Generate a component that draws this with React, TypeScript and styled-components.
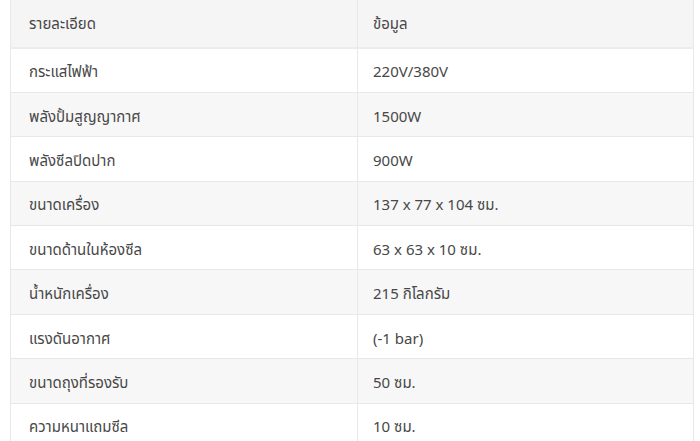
import React from "react";
import styled, { createGlobalStyle } from "styled-components";

const Global = createGlobalStyle`
  html, body { margin: 0; padding: 0; background: #ffffff; }
  body { font-family: "Noto Sans Thai", "Noto Sans", "Liberation Sans", sans-serif; }
`;

const Wrap = styled.div`
  padding: 0 6px 0 10px;
`;

const Table = styled.table`
  width: 684px;
  table-layout: fixed;
  border-collapse: collapse;
  border-left: 1px solid #e8e8e8;
  border-right: 1px solid #e8e8e8;
  font-size: 15px;
  font-weight: 400;
  color: #474747;
`;

const HeadCell = styled.th<{ $first?: boolean }>`
  background: #f5f5f5;
  text-align: left;
  font-weight: 400;
  height: 48px;
  padding: 1px 0 0 ${(p) => (p.$first ? "18px" : "15px")};
  border-bottom: 2px solid #ececec;
  border-right: 1px solid #e8e8e8;
  box-sizing: border-box;
`;

const Row = styled.tr<{ $stripe: boolean }>`
  background: ${(p) => (p.$stripe ? "#f7f7f7" : "#ffffff")};
`;

const Cell = styled.td<{ $first?: boolean }>`
  height: 44.4px;
  box-sizing: border-box;
  padding: 5px 0 0 ${(p) => (p.$first ? "18px" : "15px")};
  border-bottom: 1px solid #e8e8e8;
  border-right: 1px solid #e8e8e8;
`;

const rows: [string, string][] = [
  ["กระแสไฟฟ้า", "220V/380V"],
  ["พลังปั้มสูญญากาศ", "1500W"],
  ["พลังซีลปิดปาก", "900W"],
  ["ขนาดเครื่อง", "137 x 77 x 104 ซม."],
  ["ขนาดด้านในห้องซีล", "63 x 63 x 10 ซม."],
  ["น้ำหนักเครื่อง", "215 กิโลกรัม"],
  ["แรงดันอากาศ", "(-1 bar)"],
  ["ขนาดถุงที่รองรับ", "50 ซม."],
  ["ความหนาแถมซีล", "10 ซม."],
];

export default function App() {
  return (
    <>
      <Global />
      <Wrap>
        <Table>
          <colgroup>
            <col style={{ width: 347 }} />
            <col />
          </colgroup>
          <thead>
            <tr>
              <HeadCell $first>รายละเอียด</HeadCell>
              <HeadCell>ข้อมูล</HeadCell>
            </tr>
          </thead>
          <tbody>
            {rows.map(([k, v], i) => (
              <Row key={k} $stripe={i % 2 === 1}>
                <Cell $first>{k}</Cell>
                <Cell>{v}</Cell>
              </Row>
            ))}
          </tbody>
        </Table>
      </Wrap>
    </>
  );
}
